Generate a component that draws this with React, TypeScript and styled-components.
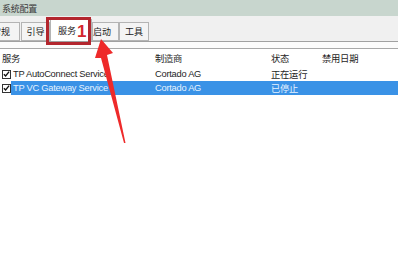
import React from "react";
import styled, { createGlobalStyle } from "styled-components";

const GlobalStyle = createGlobalStyle`
  html, body {
    margin: 0;
    padding: 0;
    background: #ffffff;
  }
  body {
    font-family: "Liberation Sans", "Noto Sans CJK SC", sans-serif;
    font-size: 9.3px;
    letter-spacing: -0.25px;
    color: #1e1e1e;
  }
`;

const Window = styled.div`
  position: relative;
  width: 398px;
  height: 258px;
  overflow: hidden;
  background: #ffffff;
`;

const TitleBar = styled.div`
  height: 16px;
  background: #c8d6ce;
  padding-left: 2px;
  display: flex;
  align-items: center;
  font-size: 9px;
  color: #3a3a3a;
`;

const TabStrip = styled.div`
  height: 25px;
  background: #f0f0f0;
  border-bottom: 1px solid #a0a0a0;
  display: flex;
  align-items: flex-end;
  overflow: hidden;
`;

const Tab = styled.div<{ $active?: boolean; $w: number; $shift?: number; $pad?: number }>`
  width: ${(p) => p.$w}px;
  height: ${(p) => (p.$active ? 22 : 19)}px;
  margin-left: ${(p) => p.$shift ?? 0}px;
  box-sizing: border-box;
  background: ${(p) => (p.$active ? "#ffffff" : "#f4f4f4")};
  border: 1px solid #b4b4b4;
  border-bottom: ${(p) => (p.$active ? "none" : "1px solid #b4b4b4")};
  display: flex;
  align-items: center;
  justify-content: ${(p) => (p.$pad !== undefined ? "flex-start" : "center")};
  padding-left: ${(p) => p.$pad ?? 0}px;
  font-size: 9px;
  letter-spacing: 0;
  color: #222;
  flex-shrink: 0;
`;

const Spacer = styled.div`
  height: 6px;
  background: #fbfbfb;
`;

const ListBox = styled.div`
  border-top: 1px solid #a8a8a8;
`;

const Row = styled.div<{ $header?: boolean }>`
  display: grid;
  grid-template-columns: 155px 116px 51px 1fr;
  height: ${(p) => (p.$header ? 17 : 14)}px;
  align-items: center;
  margin-bottom: ${(p) => (p.$header ? 1 : 0)}px;
`;

const Cell = styled.div<{ $selected?: boolean }>`
  height: 100%;
  display: flex;
  align-items: center;
  white-space: nowrap;
  background: ${(p) => (p.$selected ? "#3a92e6" : "transparent")};
  color: ${(p) => (p.$selected ? "#e6f3ff" : "#1e1e1e")};
`;

const NameCell = styled.div`
  display: flex;
  align-items: center;
  height: 100%;
  padding-left: 2px;
`;

const Check = styled.div`
  width: 9px;
  height: 9px;
  box-sizing: border-box;
  border: 1px solid #333;
  background: #fff;
  display: flex;
  align-items: center;
  justify-content: center;
  flex-shrink: 0;
`;

const NameText = styled(Cell)`
  flex: 1;
  padding-left: 2px;
`;

const Highlight = styled.div`
  grid-column: 2 / span 3;
  display: grid;
  grid-template-columns: 116px 51px 1fr;
  height: 100%;
  background: #3a92e6;
  color: #e6f3ff;
  align-items: center;
  white-space: nowrap;
`;

const Annotation = styled.div`
  position: absolute;
  left: 46px;
  top: 17px;
  width: 45px;
  height: 28px;
  box-sizing: border-box;
  border: 3px solid #b3262e;
  pointer-events: none;
  z-index: 3;
`;

const Num = styled.span`
  position: absolute;
  left: 28px;
  top: 3px;
  font-family: "Liberation Sans", sans-serif;
  font-weight: bold;
  font-size: 17px;
  line-height: 17px;
  letter-spacing: 0;
  color: #d4262e;
`;

const ArrowSvg = styled.svg`
  position: absolute;
  left: 0;
  top: 0;
  z-index: 4;
  pointer-events: none;
`;

const tick = (
  <svg width="8" height="8" viewBox="0 0 8 8">
    <path d="M1 4.2 L3 6.3 L7 1.2" fill="none" stroke="#111" strokeWidth="1.5" />
  </svg>
);

export default function App() {
  return (
    <Window>
      <GlobalStyle />
      <TitleBar>系统配置</TitleBar>
      <TabStrip>
        <Tab $w={38} $shift={-18}>常规</Tab>
        <Tab $w={29} $shift={1}>引导</Tab>
        <Tab $w={42} $active $pad={7}>服务</Tab>
        <Tab $w={27} $pad={0}>启动</Tab>
        <Tab $w={30}>工具</Tab>
      </TabStrip>
      <Spacer />
      <ListBox>
        <Row $header>
          <NameCell>服务</NameCell>
          <Cell>制造商</Cell>
          <Cell>状态</Cell>
          <Cell>禁用日期</Cell>
        </Row>
        <Row>
          <NameCell>
            <Check>{tick}</Check>
            <NameText>TP AutoConnect Service</NameText>
          </NameCell>
          <Cell>Cortado AG</Cell>
          <Cell>正在运行</Cell>
          <Cell />
        </Row>
        <Row>
          <NameCell>
            <Check>{tick}</Check>
            <NameText $selected>TP VC Gateway Service</NameText>
          </NameCell>
          <Highlight>
            <span>Cortado AG</span>
            <span>已停止</span>
            <span />
          </Highlight>
        </Row>
      </ListBox>
      <Annotation>
        <Num>1</Num>
      </Annotation>
      <ArrowSvg width="398" height="258" viewBox="0 0 398 258">
        <polygon
          points="101,39 113,53 107,55 125.5,143 124,143 101,58 95,58"
          fill="#ee2a2a"
        />
      </ArrowSvg>
    </Window>
  );
}
